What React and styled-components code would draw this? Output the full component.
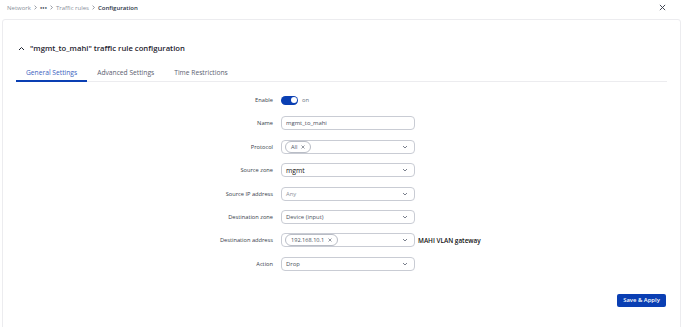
import React from 'react';
import styled, { createGlobalStyle } from 'styled-components';

const blue = '#0a3fb3';
const border = '#c9ccd4';
const muted = '#6b7280';

const Global = createGlobalStyle`
  body {
    margin: 0;
    font-family: "Open Sans", "Noto Sans", sans-serif;
    background: #fff;
  }
`;

const Page = styled.div`
  width: 690px;
  height: 327px;
  overflow: hidden;
  position: relative;
`;

const TopBar = styled.div`
  display: flex;
  align-items: center;
  justify-content: space-between;
  height: 15px;
  padding: 0 24px 0 7px;
  margin-bottom: 4px;
`;

const Crumbs = styled.div`
  display: flex;
  align-items: center;
  gap: 3px;
  font-size: 6px;
  color: #8a8f9a;
`;

const Crumb = styled.span`
  color: ${(p) => (p.$current ? '#2a3344' : '#8a8f9a')};
  font-weight: ${(p) => (p.$current ? 600 : 400)};
`;

const Dots = styled.span`
  font-size: 3.6px;
  letter-spacing: 0.2px;
  color: #2a3344;
`;

const Card = styled.section`
  margin-left: 2px;
  width: 679px;
  height: 320px;
  border: 1px solid #ececef;
  border-radius: 3px;
  padding: 0 13px 0 13px;
  box-sizing: border-box;
`;

const Title = styled.h2`
  display: flex;
  align-items: center;
  gap: 5px;
  margin: 21px 0 0 2px;
  font-size: 7.7px;
  font-weight: 600;
  color: #1f2430;
  height: 14px;
`;

const Tabs = styled.div`
  display: flex;
  margin-top: 11px;
  border-bottom: 1px solid #ececef;
`;

const Tab = styled.div`
  font-size: 6.7px;
  padding: 0 10px;
  height: 16px;
  line-height: 14px;
  color: ${(p) => (p.$active ? '#3a5fc0' : '#5b6170')};
  border-bottom: 2px solid ${(p) => (p.$active ? blue : 'transparent')};
  margin-bottom: -1px;
  box-sizing: border-box;
`;

const Form = styled.div`
  display: grid;
  grid-template-columns: 257px 134px auto;
  column-gap: 8px;
  row-gap: 9.4px;
  align-items: center;
  margin-top: 11px;
`;

const Label = styled.div`
  text-align: right;
  font-size: 5.7px;
  color: #373d4a;
`;

const Field = styled.div`
  height: 14px;
  border: 1px solid ${border};
  border-radius: 4px;
  box-sizing: border-box;
  display: flex;
  align-items: center;
  padding: 0 6px 0 ${(p) => (p.$chip ? 3 : 4)}px;
  font-size: ${(p) => (p.$strong ? 6.8 : 5.9)}px;
  color: ${(p) => (p.$strong ? '#111' : p.$faint ? '#8d929c' : '#4b5160')};
  font-weight: ${(p) => (p.$strong ? 500 : 400)};
`;

const Value = styled.span`
  flex: 1;
`;

const Chip = styled.span`
  display: inline-flex;
  align-items: center;
  gap: 4px;
  height: 10px;
  padding: 0 5px;
  border: 1px solid #b9bdc6;
  border-radius: 6px;
  font-size: 5.6px;
  color: #4b5160;
  margin-right: auto;
`;

const Aside = styled.div`
  font-size: 6.4px;
  font-weight: 600;
  color: #111;
  margin-left: -5px;
`;

const ToggleRow = styled.div`
  display: flex;
  align-items: center;
  gap: 4px;
  height: 14px;
  font-size: 5.8px;
  color: ${muted};
`;

const Switch = styled.span`
  width: 17px;
  height: 9px;
  border-radius: 5px;
  background: ${blue};
  position: relative;
  &::after {
    content: '';
    position: absolute;
    right: 1.5px;
    top: 1.5px;
    width: 6px;
    height: 6px;
    border-radius: 50%;
    background: #fff;
  }
`;

const Footer = styled.div`
  display: flex;
  justify-content: flex-end;
  margin-top: 23px;
`;

const Button = styled.button`
  height: 13px;
  width: 49px;
  padding: 0;
  margin-right: 1px;
  border: none;
  border-radius: 2px;
  background: ${blue};
  color: #fff;
  font-family: inherit;
  font-size: 5.9px;
  font-weight: 600;
`;

const Chevron = () => (
  <svg width="6" height="4" viewBox="0 0 6 4">
    <path d="M1 1l2 2 2-2" fill="none" stroke="#6b7280" strokeWidth="0.9" />
  </svg>
);

const CrumbSep = () => (
  <svg width="3" height="5" viewBox="0 0 3 5">
    <path d="M0.6 0.6L2.4 2.5L0.6 4.4" fill="none" stroke="#6b7280" strokeWidth="0.7" />
  </svg>
);

const X = ({ size = 4, color = '#7a808c', w = 0.8 }) => (
  <svg width={size} height={size} viewBox="0 0 4 4">
    <path d="M0.5 0.5l3 3M3.5 0.5l-3 3" stroke={color} strokeWidth={w} />
  </svg>
);

const Select = ({ children, ...rest }) => (
  <Field {...rest}>
    <Value>{children}</Value>
    <Chevron />
  </Field>
);

export default function App() {
  return (
    <Page>
      <Global />
      <TopBar>
        <Crumbs>
          <Crumb>Network</Crumb>
          <CrumbSep />
          <Dots>●●●</Dots>
          <CrumbSep />
          <Crumb>Traffic rules</Crumb>
          <CrumbSep />
          <Crumb $current>Configuration</Crumb>
        </Crumbs>
        <X size={7} color="#3d4350" w={0.55} />
      </TopBar>
      <Card>
        <Title>
          <svg width="7" height="5" viewBox="0 0 7 5">
            <path d="M1 4l2.5-2.5L6 4" fill="none" stroke="#1f2430" strokeWidth="1" />
          </svg>
          "mgmt_to_mahi" traffic rule configuration
        </Title>
        <Tabs>
          <Tab $active>General Settings</Tab>
          <Tab>Advanced Settings</Tab>
          <Tab>Time Restrictions</Tab>
        </Tabs>
        <Form>
          <Label>Enable</Label>
          <ToggleRow>
            <Switch />
            on
          </ToggleRow>
          <span />

          <Label>Name</Label>
          <Field>mgmt_to_mahi</Field>
          <span />

          <Label>Protocol</Label>
          <Field $chip>
            <Chip>
              All <X size={4} />
            </Chip>
            <Chevron />
          </Field>
          <span />

          <Label>Source zone</Label>
          <Select $strong>mgmt</Select>
          <span />

          <Label>Source IP address</Label>
          <Select $faint>Any</Select>
          <span />

          <Label>Destination zone</Label>
          <Select>Device (input)</Select>
          <span />

          <Label>Destination address</Label>
          <Field $chip>
            <Chip>
              192.168.10.1 <X size={4} />
            </Chip>
            <Chevron />
          </Field>
          <Aside>MAHI VLAN gateway</Aside>

          <Label>Action</Label>
          <Select>Drop</Select>
          <span />
        </Form>
        <Footer>
          <Button>Save &amp; Apply</Button>
        </Footer>
      </Card>
    </Page>
  );
}
